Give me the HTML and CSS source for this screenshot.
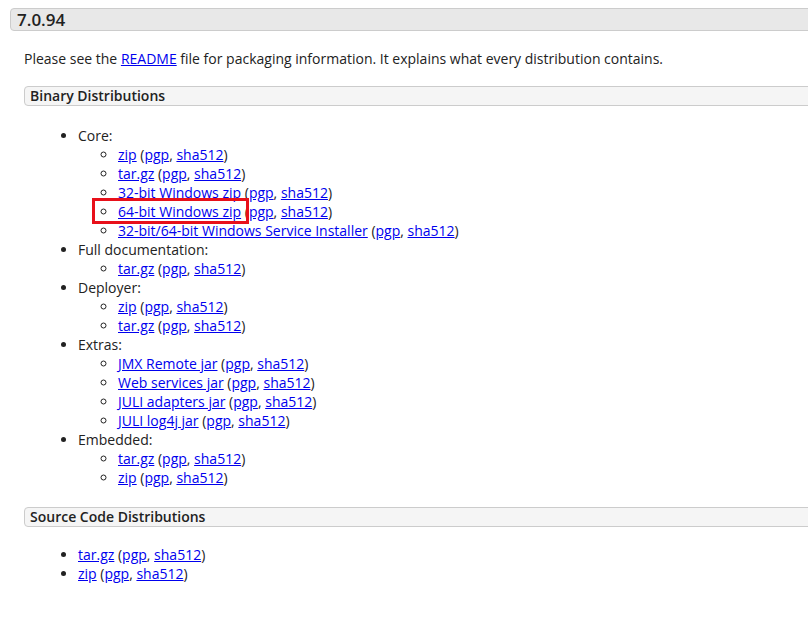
FILE: index.html
```html
<!DOCTYPE html>
<html lang="en">
<head>
    <meta charset="UTF-8">
    <title>Apache Tomcat 7.0.94</title>
    <link rel="stylesheet" href="styles.css">
</head>
<body>
    <div class="page">
        <h2 class="version">7.0.94</h2>
        <div class="release">
            <p class="intro">Please see the <a href="#">README</a> file for packaging information. It explains what every distribution contains.</p>

            <h3 class="dist-title">Binary Distributions</h3>
            <ul class="dist">
                <li>Core:
                    <ul>
                        <li><a href="#">zip</a> (<a href="#">pgp</a>, <a href="#">sha512</a>)</li>
                        <li><a href="#">tar.gz</a> (<a href="#">pgp</a>, <a href="#">sha512</a>)</li>
                        <li><a href="#">32-bit Windows zip</a> (<a href="#">pgp</a>, <a href="#">sha512</a>)</li>
                        <li class="picked"><span class="mark"></span><a href="#">64-bit Windows zip</a> (<a href="#">pgp</a>, <a href="#">sha512</a>)</li>
                        <li><a href="#">32-bit/64-bit Windows Service Installer</a> (<a href="#">pgp</a>, <a href="#">sha512</a>)</li>
                    </ul>
                </li>
                <li>Full documentation:
                    <ul>
                        <li><a href="#">tar.gz</a> (<a href="#">pgp</a>, <a href="#">sha512</a>)</li>
                    </ul>
                </li>
                <li>Deployer:
                    <ul>
                        <li><a href="#">zip</a> (<a href="#">pgp</a>, <a href="#">sha512</a>)</li>
                        <li><a href="#">tar.gz</a> (<a href="#">pgp</a>, <a href="#">sha512</a>)</li>
                    </ul>
                </li>
                <li>Extras:
                    <ul>
                        <li><a href="#">JMX Remote jar</a> (<a href="#">pgp</a>, <a href="#">sha512</a>)</li>
                        <li><a href="#">Web services jar</a> (<a href="#">pgp</a>, <a href="#">sha512</a>)</li>
                        <li><a href="#">JULI adapters jar</a> (<a href="#">pgp</a>, <a href="#">sha512</a>)</li>
                        <li><a href="#">JULI log4j jar</a> (<a href="#">pgp</a>, <a href="#">sha512</a>)</li>
                    </ul>
                </li>
                <li>Embedded:
                    <ul>
                        <li><a href="#">tar.gz</a> (<a href="#">pgp</a>, <a href="#">sha512</a>)</li>
                        <li><a href="#">zip</a> (<a href="#">pgp</a>, <a href="#">sha512</a>)</li>
                    </ul>
                </li>
            </ul>

            <h3 class="dist-title">Source Code Distributions</h3>
            <ul class="dist source">
                <li><a href="#">tar.gz</a> (<a href="#">pgp</a>, <a href="#">sha512</a>)</li>
                <li><a href="#">zip</a> (<a href="#">pgp</a>, <a href="#">sha512</a>)</li>
            </ul>
        </div>
    </div>
</body>
</html>
```

FILE: styles.css
```css
body {
    margin: 0;
    background: #fff;
    color: #222;
    font-family: "Open Sans", Arial, sans-serif;
    font-size: 14px;
    line-height: 19px;
    overflow: hidden;
}

a {
    color: #0000ee;
}

.page {
    padding: 8px 0 40px 10px;
    border-left: 1px solid #f6f6f6;
    margin-left: -1px;
}

.version {
    margin: 0 -20px 0 0;
    padding: 0 6px;
    font-size: 17px;
    font-weight: 600;
    line-height: 21px;
    background: #e8e8e8;
    border: 1px solid #cccccc;
    border-radius: 4px;
}

.release {
    margin-left: 14px;
}

.intro {
    margin: 18px 0;
}

.dist-title {
    margin: 18px -20px 0 0;
    padding: 0 5px;
    font-size: 14px;
    font-weight: 600;
    line-height: 18px;
    background: #f5f5f5;
    border: 1px solid #cccccc;
    border-radius: 4px;
}

.dist {
    margin: 20px 0;
    padding-left: 54px;
}

    .dist.source {
        margin-top: 18px;
    }

    .dist ul {
        margin: 0;
        padding-left: 40px;
        list-style: circle;
    }

.picked {
    position: relative;
}

    .picked .mark {
        position: absolute;
        left: -26px;
        top: -4px;
        width: 151px;
        height: 20px;
        border: 3px solid #e8101a;
    }
```
